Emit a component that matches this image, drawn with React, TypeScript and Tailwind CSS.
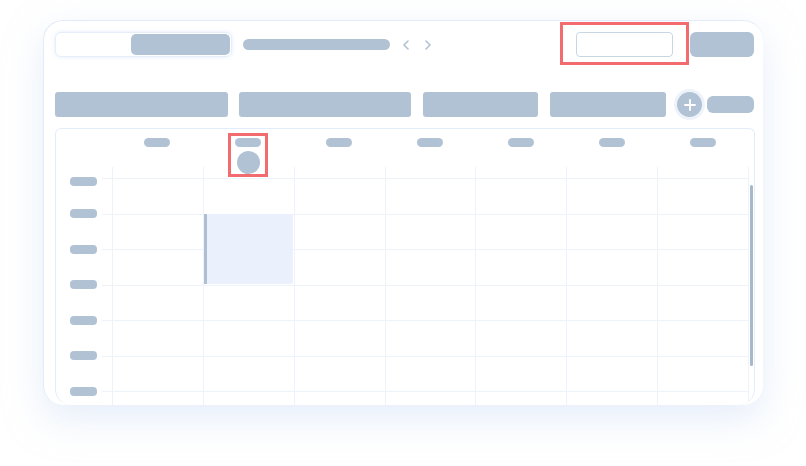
import React from 'react';

const rows = [0, 1, 2, 3, 4, 5, 6];
const days = [0, 1, 2, 3, 4, 5, 6];

function Chevron({ dir }: { dir: 'left' | 'right' }) {
  return (
    <svg width="8" height="10" viewBox="0 0 8 10" fill="none" className="block">
      <path
        d={dir === 'left' ? 'M6 1 L2 5 L6 9' : 'M2 1 L6 5 L2 9'}
        stroke="#b1c2d4"
        strokeWidth="1.6"
        strokeLinecap="round"
        strokeLinejoin="round"
      />
    </svg>
  );
}

function TopBar() {
  return (
    <div className="flex h-[25px] items-center">
      <div className="flex h-[25px] w-[177px] justify-end rounded-[6px] border border-[#e6eefa] bg-white p-px shadow-[0_0_4px_rgba(200,220,250,0.5)]">
        <div className="h-[21px] w-[99px] rounded-[5px] bg-[#b1c2d4]" />
      </div>
      <div className="ml-[11px] h-[11px] w-[147px] rounded-full bg-[#b1c2d4]" />
      <div className="ml-[12px] flex items-center gap-[14px]">
        <Chevron dir="left" />
        <Chevron dir="right" />
      </div>
      <div className="relative ml-auto h-[25px] w-[97px] rounded-[4px] border border-[#c8d5e3] bg-white">
        <div className="absolute -bottom-[9px] -left-[17px] -right-[17px] -top-[11px] border-[3px] border-[#f26b6e]" />
      </div>
      <div className="ml-[17px] mr-px h-[25px] w-[64px] rounded-[6px] bg-[#b1c2d4]" />
    </div>
  );
}

function FilterRow() {
  return (
    <div className="mt-[35px] flex h-[25px] items-center">
      <div className="h-[25px] w-[173px] rounded-[3px] bg-[#b1c2d4]" />
      <div className="ml-[11px] h-[25px] w-[172px] rounded-[3px] bg-[#b1c2d4]" />
      <div className="ml-[12px] h-[25px] w-[115px] rounded-[3px] bg-[#b1c2d4]" />
      <div className="ml-[12px] h-[25px] w-[116px] rounded-[3px] bg-[#b1c2d4]" />
      <div className="ml-[11px] flex h-[25px] w-[25px] items-center justify-center rounded-full bg-[#b1c2d4] shadow-[0_0_0_3px_#eef3fb]">
        <svg width="12" height="12" viewBox="0 0 12 12" fill="none">
          <path d="M6 1 V11 M1 6 H11" stroke="#ffffff" strokeWidth="1.8" strokeLinecap="round" />
        </svg>
      </div>
      <div className="ml-[5px] mr-px h-[17px] w-[47px] rounded-[6px] bg-[#b1c2d4]" />
    </div>
  );
}

function Calendar() {
  return (
    <div className="mt-[11px] h-[277px] overflow-hidden rounded-t-[6px] rounded-b-[16px] border-x border-t border-[#e3ecf9] bg-white">
      {/* day header */}
      <div className="relative z-20 flex h-[38px]">
        <div className="w-[56px] shrink-0" />
        {days.map((d) => (
          <div key={d} className="flex flex-1 flex-col items-center pt-[9px]">
            {d === 1 ? (
              <div className="relative flex w-[26px] flex-col items-center">
                <div className="h-[9px] w-[26px] rounded-full bg-[#b1c2d4]" />
                <div className="mt-[4px] h-[23px] w-[23px] rounded-full bg-[#b1c2d4]" />
                <div className="absolute -bottom-[3px] -left-[7px] -right-[7px] -top-[5px] border-[3px] border-[#f26b6e]" />
              </div>
            ) : (
              <div className="h-[9px] w-[26px] rounded-full bg-[#b1c2d4]" />
            )}
          </div>
        ))}
        <div className="w-[6px] shrink-0" />
      </div>

      {/* body */}
      <div className="flex">
        <div className="w-[56px] shrink-0 pt-[11px]">
          {rows.map((r) => (
            <div key={r} className="flex h-[35.5px] items-start">
              <div
                className={
                  r === 0
                    ? 'ml-[14px] -mt-px h-[9px] w-[27px] rounded-[4px] bg-[#b1c2d4]'
                    : 'ml-[14px] -mt-[4.5px] h-[9px] w-[27px] rounded-[4px] bg-[#b1c2d4]'
                }
              />
              <div className="ml-[5px] w-[10px] border-t border-[#eef3fb]" />
            </div>
          ))}
        </div>
        {days.map((d) => (
          <div
            key={d}
            className={
              d === 6
                ? 'flex-1 border-x border-[#eef2fa] pt-[11px]'
                : 'flex-1 border-l border-[#eef2fa] pt-[11px]'
            }
          >
            {rows.map((r) => (
              <div key={r} className="relative h-[35.5px] border-t border-[#eef3fb]">
                {d === 1 && r === 1 && (
                  <div className="absolute -top-px left-0 right-px z-10 h-[70px] rounded-r-[3px] border-l-[3px] border-[#aebfd2] bg-[#eaf1fc]" />
                )}
              </div>
            ))}
          </div>
        ))}
        <div className="w-[5px] shrink-0">
          <div className="ml-px mt-[18px] h-[181px] w-[3px] rounded-full bg-[#a9b8c8]" />
        </div>
      </div>
    </div>
  );
}

export default function App() {
  return (
    <div className="min-h-screen w-full bg-white pt-5 font-['Inter',sans-serif]">
      <div className="mx-auto h-[385px] w-[720px] overflow-hidden rounded-[20px] border-l border-t border-[#e1ebf9] bg-white pl-[11px] pr-[8px] pt-[11px] shadow-[0_14px_36px_rgba(205,222,245,0.5)]">
        <TopBar />
        <FilterRow />
        <Calendar />
      </div>
    </div>
  );
}
